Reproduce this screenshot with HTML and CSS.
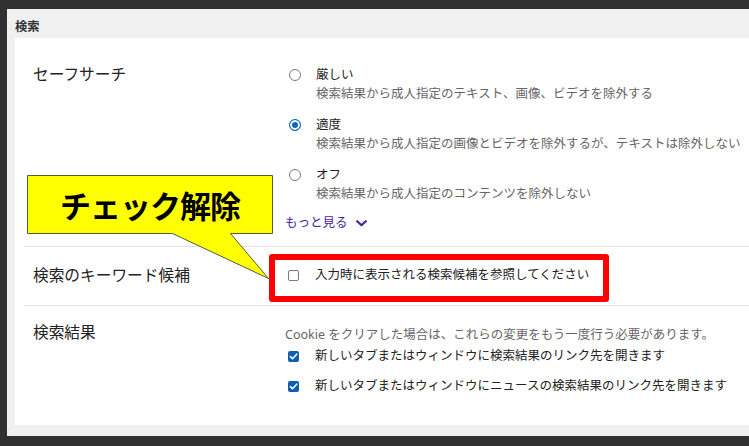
FILE: index.html
```html
<!DOCTYPE html>
<html lang="ja">
<head>
<meta charset="utf-8">
<title>検索</title>
<link rel="stylesheet" href="styles.css">
</head>
<body>
<div class="panel">
  <div class="panel-title">検索</div>
  <div class="card">
    <div class="row row-safe">
      <div class="row-label">セーフサーチ</div>
      <div class="row-body">
        <div class="option">
          <span class="radio"></span>
          <div class="option-text">
            <div class="option-title">厳しい</div>
            <div class="desc">検索結果から成人指定のテキスト、画像、ビデオを除外する</div>
          </div>
        </div>
        <div class="option">
          <span class="radio checked"></span>
          <div class="option-text">
            <div class="option-title">適度</div>
            <div class="desc">検索結果から成人指定の画像とビデオを除外するが、テキストは除外しない</div>
          </div>
        </div>
        <div class="option">
          <span class="radio"></span>
          <div class="option-text">
            <div class="option-title">オフ</div>
            <div class="desc">検索結果から成人指定のコンテンツを除外しない</div>
          </div>
        </div>
        <a class="more">もっと見る<svg class="chev" width="11" height="7" viewBox="0 0 11 7"><polyline points="1.2,1.2 5.5,5.3 9.8,1.2" fill="none" stroke="currentColor" stroke-width="2.2" stroke-linecap="round" stroke-linejoin="round"/></svg></a>
      </div>
    </div>
    <div class="row row-suggest">
      <div class="row-label">検索のキーワード候補</div>
      <div class="row-body">
        <div class="check-item">
          <span class="checkbox"></span>
          <span class="check-text">入力時に表示される検索候補を参照してください</span>
        </div>
      </div>
    </div>
    <div class="row row-results">
      <div class="row-label label-results">検索結果</div>
      <div class="row-body">
        <div class="note">Cookie をクリアした場合は、これらの変更をもう一度行う必要があります。</div>
        <div class="check-item first">
          <span class="checkbox checked"><svg width="11" height="11" viewBox="0 0 11 11"><polyline points="2.4,5.6 4.5,7.7 8.7,3.2" fill="none" stroke="#fff" stroke-width="1.6" stroke-linecap="round" stroke-linejoin="round"/></svg></span>
          <span class="check-text">新しいタブまたはウィンドウに検索結果のリンク先を開きます</span>
        </div>
        <div class="check-item second">
          <span class="checkbox checked"><svg width="11" height="11" viewBox="0 0 11 11"><polyline points="2.4,5.6 4.5,7.7 8.7,3.2" fill="none" stroke="#fff" stroke-width="1.6" stroke-linecap="round" stroke-linejoin="round"/></svg></span>
          <span class="check-text">新しいタブまたはウィンドウにニュースの検索結果のリンク先を開きます</span>
        </div>
      </div>
    </div>
  </div>
</div>

<div class="callout">
  <svg class="callout-shape" width="246" height="105" viewBox="0 0 246 105">
    <path d="M0.5,0.5 H245.5 V58.5 H203.5 L241.5,103.5 L145.5,58.5 H0.5 Z" fill="#ffff00" stroke="#4f5f35" stroke-width="1"/>
  </svg>
  <div class="callout-text">チェック解除</div>
</div>
<div class="highlight"></div>
</body>
</html>
```

FILE: styles.css
```css
html, body {
  margin: 0;
  padding: 0;
}

body {
  background: #303030;
  width: 749px;
  height: 446px;
  overflow: hidden;
  font-family: "Segoe UI", "Noto Sans", "Noto Sans CJK JP", sans-serif;
  color: #222;
}

.panel {
  margin: 9px 0 0 7px;
  height: 427px;
  background: #f0f0f0;
}

.panel-title {
  height: 29px;
  box-sizing: border-box;
  padding: 10px 0 0 8px;
  font-size: 12.3px;
  line-height: 16px;
  font-weight: 700;
  color: #333;
}

.card {
  margin-left: 8px;
  height: 387px;
  background: #fff;
}

.row {
  display: flex;
  margin-left: 9px;
  padding-left: 9px;
  border-bottom: 1px solid #e1e1e1;
}

.row-label {
  width: 252px;
  flex: none;
  font-size: 15.7px;
  line-height: 19px;
  color: #222;
}

.row-body {
  flex: 1;
  display: flex;
  flex-direction: column;
  white-space: nowrap;
}

.row-safe {
  padding-top: 27px;
  padding-bottom: 14px;
}

.option {
  display: flex;
  padding-left: 4px;
  gap: 15px;
}

.option + .option {
  margin-top: 12px;
}

.radio {
  flex: none;
  width: 12px;
  height: 12px;
  margin-top: 3.5px;
  box-sizing: border-box;
  border: 1px solid #7a7a7a;
  border-radius: 50%;
  background: #fff;
}

.radio.checked {
  border: 1.5px solid #0a66c2;
  background: #0a66c2;
  box-shadow: inset 0 0 0 2px #fff;
}

.option-title {
  font-size: 12.5px;
  line-height: 19px;
  color: #222;
}

.desc {
  font-size: 12.5px;
  line-height: 19px;
  color: #666;
}

.more {
  margin-top: 10px;
  font-size: 12.5px;
  line-height: 19px;
  color: #4b1fa3;
  display: flex;
  align-items: center;
  gap: 8px;
}

.chev {
  display: block;
  margin-top: 2px;
}

.row-suggest {
  padding-top: 18px;
  padding-bottom: 20px;
}

.row-suggest .row-label {
  line-height: 20px;
}

.check-item {
  display: flex;
  align-items: center;
  padding-left: 3px;
  gap: 16px;
  height: 20px;
}

.checkbox {
  flex: none;
  width: 11px;
  height: 11px;
  box-sizing: border-box;
  border: 1px solid #7a7a7a;
  border-radius: 2px;
  background: #fff;
  display: flex;
}

.checkbox.checked {
  border: none;
  background: #0f5fb0;
}

.check-text {
  font-size: 12.5px;
  line-height: 20px;
  color: #222;
}

.row-results {
  padding-top: 19px;
  border-bottom: none;
}

.label-results {
  margin-top: -2px;
}

.note {
  font-size: 12.5px;
  line-height: 20px;
  color: #666;
}

.check-item.first {
  margin-top: 1px;
}

.check-item.second {
  margin-top: 10px;
}

/* overlays */
.callout {
  position: absolute;
  left: 27px;
  top: 175px;
  width: 246px;
  height: 105px;
}

.callout-shape {
  position: absolute;
  left: 0;
  top: 0;
}

.callout-text {
  position: absolute;
  left: 0;
  top: 0;
  width: 246px;
  height: 59px;
  display: flex;
  align-items: center;
  justify-content: center;
  font-family: "Noto Sans CJK JP", sans-serif;
  font-weight: 700;
  font-size: 31px;
  letter-spacing: -1px;
  color: #000;
}

.highlight {
  position: absolute;
  left: 269px;
  top: 254px;
  width: 340px;
  height: 48px;
  box-sizing: border-box;
  border: 6px solid #ff0000;
  border-radius: 3px;
}
```
